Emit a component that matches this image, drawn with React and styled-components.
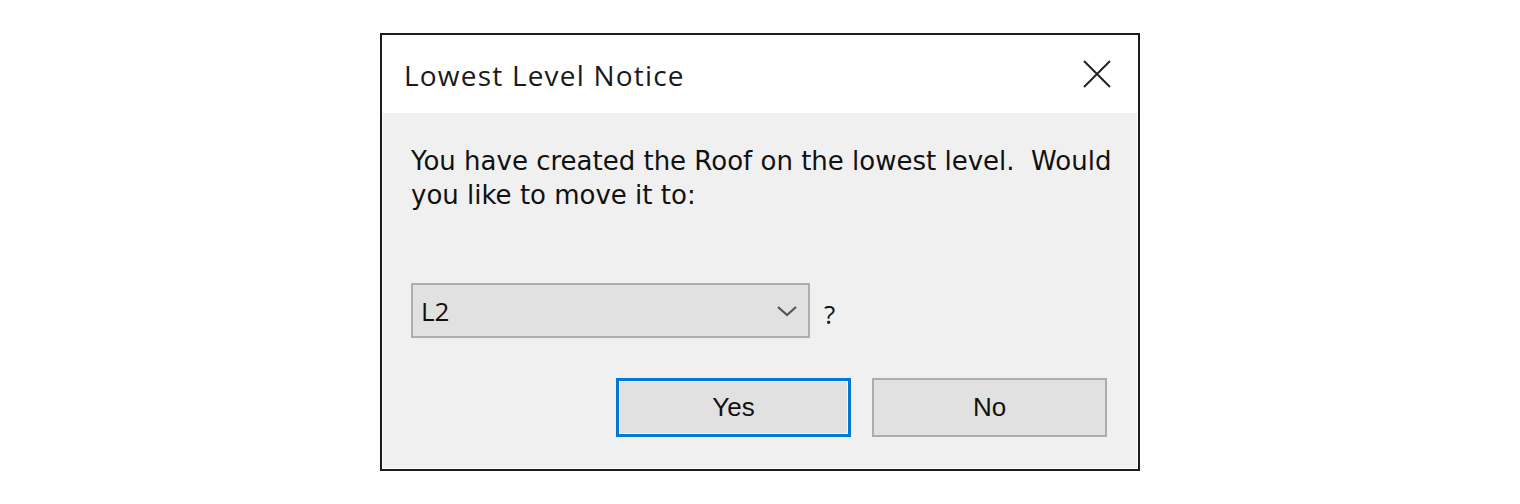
import React from 'react';
import styled, { createGlobalStyle } from 'styled-components';

const Global = createGlobalStyle`
  html, body {
    margin: 0;
    padding: 0;
    background: #fff;
  }
  body {
    height: 504px;
  }
  #root {
    height: 100%;
  }
`;

const Page = styled.div`
  height: 100%;
  display: flex;
  align-items: center;
  justify-content: center;
`;

const Dialog = styled.div`
  width: 756px;
  height: 434px;
  border: 2px solid #1c1c1c;
  background: #f0f0f0;
  display: flex;
  flex-direction: column;
  box-shadow: inset -1px -1px 0 #fff, inset 1px 0 0 #fafafa;
`;

const TitleBar = styled.div`
  height: 78px;
  flex: none;
  background: #fff;
  display: flex;
  align-items: center;
  justify-content: space-between;
  padding: 0 26px 0 22px;
`;

const Title = styled.div`
  font-family: "Open Sans", "Noto Sans", sans-serif;
  font-size: 28px;
  letter-spacing: 1.2px;
  color: #1a1a1a;
  padding-top: 1px;
`;

const Close = styled.button`
  border: none;
  background: none;
  padding: 0;
  width: 30px;
  height: 30px;
  display: flex;
  align-items: center;
  justify-content: center;
  cursor: pointer;
`;

const Body = styled.div`
  flex: 1;
  display: flex;
  flex-direction: column;
  padding: 31px 31px 32px 29px;
`;

const Message = styled.p`
  margin: 0;
  font-family: "DejaVu Sans", Verdana, sans-serif;
  font-size: 26px;
  line-height: 34px;
  color: #111;
  white-space: pre;
`;

const PickRow = styled.div`
  margin-top: 71px;
  display: flex;
  align-items: center;
  gap: 14px;
`;

const Combo = styled.div`
  box-sizing: border-box;
  width: 399px;
  height: 55px;
  border: 2px solid #adadad;
  background: #e1e1e1;
  display: flex;
  align-items: center;
  justify-content: space-between;
  padding: 0 10px 0 8px;
  font-family: "Open Sans", "Noto Sans", sans-serif;
  font-size: 26px;
  color: #111;
`;

const Question = styled.span`
  font-family: "Open Sans", "Noto Sans", sans-serif;
  font-size: 26px;
  color: #111;
  padding-top: 6px;
`;

const Buttons = styled.div`
  margin-top: auto;
  display: flex;
  justify-content: flex-end;
  gap: 21px;
`;

const Button = styled.button`
  width: 235px;
  height: 59px;
  box-sizing: border-box;
  background: #e1e1e1;
  border: ${({ $default }) => ($default ? '3px solid #0078d7' : '2px solid #adadad')};
  box-shadow: ${({ $default }) => ($default ? 'inset 0 0 0 1px #f4f8fc' : 'none')};
  font-family: "Liberation Sans", Arial, sans-serif;
  font-size: 26px;
  color: #111;
  padding: 0;
  cursor: pointer;
`;

const Chevron = () => (
  <svg width="22" height="12" viewBox="0 0 22 12" fill="none">
    <path d="M2 2 L11 10 L20 2" stroke="#555" strokeWidth="2.2" />
  </svg>
);

const CloseIcon = () => (
  <svg width="28" height="28" viewBox="0 0 28 28" fill="none">
    <path d="M1 1 L27 27 M27 1 L1 27" stroke="#222" strokeWidth="2" />
  </svg>
);

export default function App() {
  return (
    <>
      <Global />
      <Page>
        <Dialog>
          <TitleBar>
            <Title>Lowest Level Notice</Title>
            <Close aria-label="Close"><CloseIcon /></Close>
          </TitleBar>
          <Body>
            <Message>{'You have created the Roof on the lowest level.  Would\nyou like to move it to:'}</Message>
            <PickRow>
              <Combo>
                <span>L2</span>
                <Chevron />
              </Combo>
              <Question>?</Question>
            </PickRow>
            <Buttons>
              <Button $default>Yes</Button>
              <Button>No</Button>
            </Buttons>
          </Body>
        </Dialog>
      </Page>
    </>
  );
}
